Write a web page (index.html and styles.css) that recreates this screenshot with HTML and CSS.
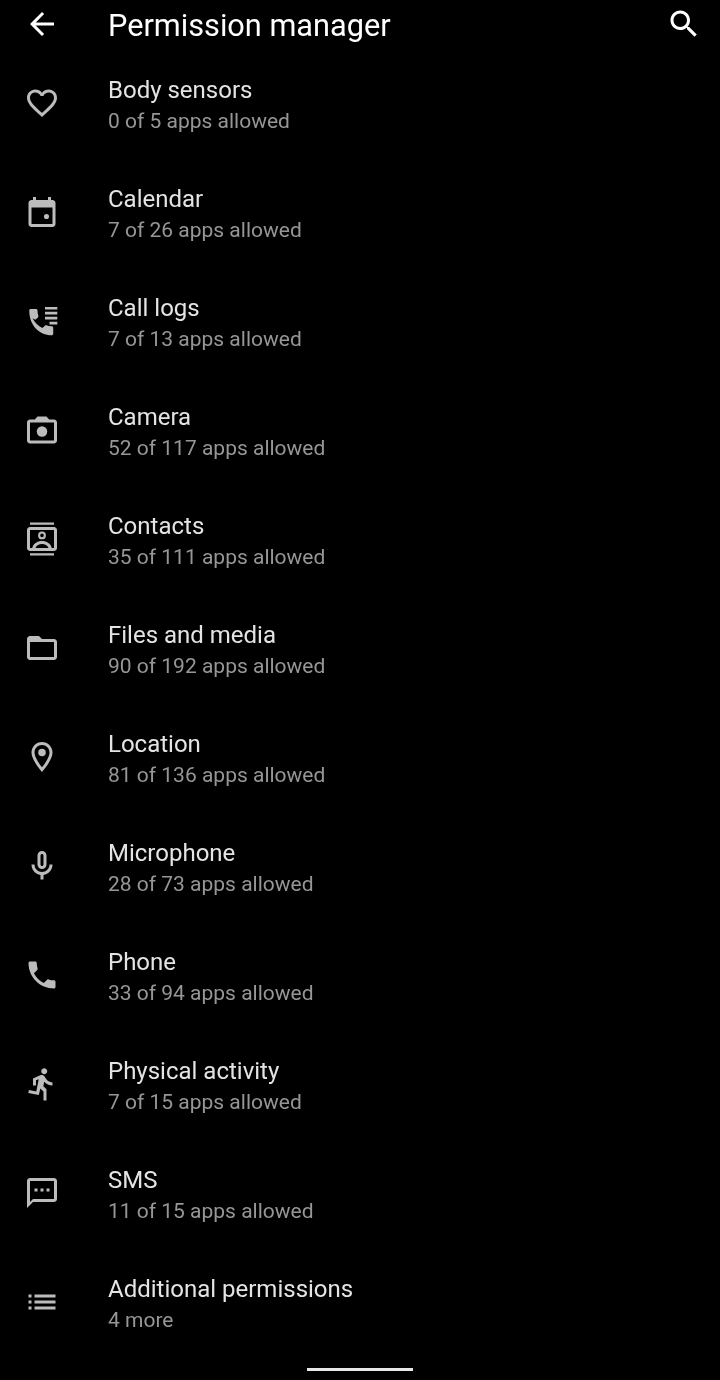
FILE: index.html
```html
<!DOCTYPE html>
<html>
<head>
    <title>Permission manager</title>
    <link rel="stylesheet" href="styles.css">
</head>
<body>
    <div class="toolbar">
        <svg class="toolbar-icon" viewBox="0 0 24 24"><path d="M20 11H7.830l5.590-5.590L12 4l-8 8 8 8 1.410-1.410L7.830 13H20v-2z"/></svg>
        <h1>Permission manager</h1>
        <svg class="toolbar-icon" viewBox="0 0 24 24"><path d="M15.500 14h-.79l-.28-.27C15.410 12.590 16 11.110 16 9.500 16 5.910 13.090 3 9.500 3S3 5.910 3 9.500 5.910 16 9.500 16c1.610 0 3.090-.59 4.230-1.570l.27.28v.79l5 4.990L20.490 19l-4.990-5zm-6 0C7.010 14 5 11.990 5 9.500S7.010 5 9.500 5 14 7.010 14 9.500 11.990 14 9.500 14z"/></svg>
    </div>

    <div class="list">
        <div class="row">
            <svg class="icon" viewBox="0 0 24 24"><path d="M16.500 3c-1.740 0-3.410.81-4.500 2.090C10.910 3.810 9.240 3 7.500 3 4.420 3 2 5.420 2 8.500c0 3.780 3.400 6.860 8.550 11.540L12 21.350l1.450-1.320C18.600 15.360 22 12.280 22 8.500 22 5.420 19.580 3 16.500 3zm-4.400 15.550l-.1.1-.1-.1C7.140 14.240 4 11.390 4 8.500 4 6.500 5.500 5 7.500 5c1.540 0 3.040.99 3.570 2.360h1.870C13.460 5.990 14.960 5 16.500 5c2 0 3.500 1.500 3.500 3.500 0 2.890-3.140 5.740-7.900 10.050z"/></svg>
            <div class="text">
                <div class="name">Body sensors</div>
                <div class="count">0 of 5 apps allowed</div>
            </div>
        </div>
        <div class="row">
            <svg class="icon" viewBox="0 0 24 24"><path d="M19 4h-1V2h-2v2H8V2H6v2H5c-1.100 0-2 .9-2 2v14c0 1.100.9 2 2 2h14c1.100 0 2-.9 2-2V6c0-1.100-.9-2-2-2zm0 16H5V9h14v11z"/><circle cx="15" cy="15" r="1.700"/></svg>
            <div class="text">
                <div class="name">Calendar</div>
                <div class="count">7 of 26 apps allowed</div>
            </div>
        </div>
        <div class="row">
            <svg class="icon" viewBox="0 0 24 24"><path d="M5.700 10.100c1.440 2.830 3.760 5.140 6.590 6.590l1.600-1.600c.27-.27.67-.36 1.020-.24 1.120.37 2.330.57 3.570.57.55 0 1 .45 1 1V20.500c0 .55-.45 1-1 1C10.100 21.500 3.500 14.900 3.500 5c0-.55.45-1 1-1H8c.55 0 1 .45 1 1 0 1.250.2 2.450.57 3.570.11.35.03.74-.25 1.020L7.500 11.200z"/><path d="M14 2.600h8.200v1.800H14zM14 5.900h8.200v1.800H14zM14 9.200h8.200V11H14zM17 12.500h5.200v1.800H17z"/></svg>
            <div class="text">
                <div class="name">Call logs</div>
                <div class="count">7 of 13 apps allowed</div>
            </div>
        </div>
        <div class="row">
            <svg class="icon" viewBox="0 0 24 24"><path d="M20 5h-3.200L15 3H9L7.200 5H4c-1.100 0-2 .9-2 2v12c0 1.100.9 2 2 2h16c1.100 0 2-.9 2-2V7c0-1.100-.9-2-2-2zm0 14H4V7h16v12z"/><circle cx="12" cy="13" r="3.500"/></svg>
            <div class="text">
                <div class="name">Camera</div>
                <div class="count">52 of 117 apps allowed</div>
            </div>
        </div>
        <div class="row">
            <svg class="icon" viewBox="0 0 24 24"><path d="M4 1h16v1.500H4zM4 21.500h16V23H4zM20 4H4c-1.100 0-2 .9-2 2v12c0 1.100.9 2 2 2h16c1.100 0 2-.9 2-2V6c0-1.100-.9-2-2-2zm0 14H4V6h16v12z"/><path fill-rule="evenodd" d="M12 7a2.600 2.600 0 1 0 0 5.200A2.600 2.600 0 0 0 12 7zm0 1.400a1.200 1.200 0 1 1 0 2.400 1.200 1.200 0 0 1 0-2.400z"/><path d="M5.500 18c.6-2.800 3.400-4.600 6.500-4.600s5.900 1.800 6.500 4.600h-2.100c-.7-1.700-2.500-2.700-4.400-2.700s-3.700 1-4.400 2.700z"/></svg>
            <div class="text">
                <div class="name">Contacts</div>
                <div class="count">35 of 111 apps allowed</div>
            </div>
        </div>
        <div class="row">
            <svg class="icon" viewBox="0 0 24 24"><path d="M20 6h-8l-2-2H4c-1.100 0-1.990.9-1.990 2L2 18c0 1.100.9 2 2 2h16c1.100 0 2-.9 2-2V8c0-1.100-.9-2-2-2zm0 12H4V8h16v10z"/></svg>
            <div class="text">
                <div class="name">Files and media</div>
                <div class="count">90 of 192 apps allowed</div>
            </div>
        </div>
        <div class="row">
            <svg class="icon" viewBox="0 0 24 24"><path d="M12 2C8.130 2 5 5.130 5 9c0 5.250 7 13 7 13s7-7.750 7-13c0-3.870-3.130-7-7-7zM7 9c0-2.760 2.240-5 5-5s5 2.240 5 5c0 2.880-2.880 7.190-5 9.880C9.920 16.210 7 11.850 7 9z"/><circle cx="12" cy="9" r="2.500"/></svg>
            <div class="text">
                <div class="name">Location</div>
                <div class="count">81 of 136 apps allowed</div>
            </div>
        </div>
        <div class="row">
            <svg class="icon" viewBox="0 0 24 24"><path d="M12 14c1.660 0 3-1.340 3-3V5c0-1.660-1.340-3-3-3S9 3.340 9 5v6c0 1.660 1.340 3 3 3zm-1-9c0-.55.45-1 1-1s1 .45 1 1v6c0 .55-.45 1-1 1s-1-.45-1-1V5zm6 6c0 2.760-2.240 5-5 5s-5-2.240-5-5H5c0 3.530 2.610 6.430 6 6.920V21h2v-3.080c3.390-.49 6-3.390 6-6.920h-2z"/></svg>
            <div class="text">
                <div class="name">Microphone</div>
                <div class="count">28 of 73 apps allowed</div>
            </div>
        </div>
        <div class="row">
            <svg class="icon" viewBox="0 0 24 24"><path d="M6.620 10.790c1.440 2.830 3.760 5.140 6.590 6.590l2.200-2.200c.27-.27.67-.36 1.020-.24 1.120.37 2.330.57 3.570.57.55 0 1 .45 1 1V20c0 .55-.45 1-1 1-9.390 0-17-7.610-17-17 0-.55.45-1 1-1h3.500c.55 0 1 .45 1 1 0 1.250.2 2.450.57 3.570.11.35.03.74-.25 1.020l-2.200 2.200z"/></svg>
            <div class="text">
                <div class="name">Phone</div>
                <div class="count">33 of 94 apps allowed</div>
            </div>
        </div>
        <div class="row">
            <svg class="icon" viewBox="0 0 24 24"><path d="M13.490 5.480c1.100 0 2-.9 2-2s-.9-2-2-2-2 .9-2 2 .9 2 2 2zm-3.600 13.900l1-4.400 2.100 2v6h2v-7.500l-2.100-2 .6-3c1.300 1.500 3.300 2.500 5.500 2.500v-2c-1.900 0-3.500-1-4.300-2.400l-1-1.600c-.4-.6-1-1-1.700-1-.3 0-.5.1-.8.1l-5.200 2.200v4.700h2v-3.400l1.800-.7-1.600 8.100-4.900-1-.4 2 7 1.400z"/></svg>
            <div class="text">
                <div class="name">Physical activity</div>
                <div class="count">7 of 15 apps allowed</div>
            </div>
        </div>
        <div class="row">
            <svg class="icon" viewBox="0 0 24 24"><path d="M20 2H4c-1.100 0-2 .9-2 2v18l4-4h14c1.100 0 2-.9 2-2V4c0-1.100-.9-2-2-2zm0 14H6l-2 2V4h16v12z"/><path d="M7 9h2v2H7zM11 9h2v2h-2zM15 9h2v2h-2z"/></svg>
            <div class="text">
                <div class="name">SMS</div>
                <div class="count">11 of 15 apps allowed</div>
            </div>
        </div>
        <div class="row">
            <svg class="icon" viewBox="0 0 24 24"><path d="M3 7h2v2H3zM3 11h2v2H3zM3 15h2v2H3zM7 7h14v2H7zM7 11h14v2H7zM7 15h14v2H7z"/></svg>
            <div class="text">
                <div class="name">Additional permissions</div>
                <div class="count">4 more</div>
            </div>
        </div>
    </div>

    <div class="nav-hint">
        <div class="nav-bar"></div>
    </div>
</body>
</html>
```

FILE: styles.css
```css
html, body {
    height: 100%;
}
body {
    margin: 0;
    background-color: #000;
    font-family: Roboto, "Noto Sans", Arial, sans-serif;
    overflow: hidden;
    filter: blur(0.45px);
}
.toolbar {
    display: flex;
    align-items: center;
    height: 48px;
    padding: 0 18px 0 24px;
    box-sizing: border-box;
}
.toolbar h1 {
    flex: 1;
    margin: 0 0 0 48px;
    padding-top: 2px;
    font-size: 30.7px;
    font-weight: 400;
    color: #fff;
}
.toolbar-icon {
    width: 36px;
    height: 36px;
    fill: #fff;
}
.row {
    display: flex;
    align-items: center;
    height: 109px;
    padding-left: 24px;
}
.icon {
    width: 36px;
    height: 36px;
    fill: #bcbcbc;
    flex-shrink: 0;
}
.text {
    margin-left: 48px;
    margin-top: 6px;
}
.name {
    font-size: 24px;
    line-height: 29px;
    padding-bottom: 1px;
    color: #e4e4e4;
}
.count {
    font-size: 21px;
    line-height: 30px;
    color: #969696;
}
.nav-hint {
    display: flex;
    justify-content: center;
    margin-top: 12px;
}
.nav-bar {
    width: 106px;
    height: 3px;
    background-color: #e8e8e8;
}
```
